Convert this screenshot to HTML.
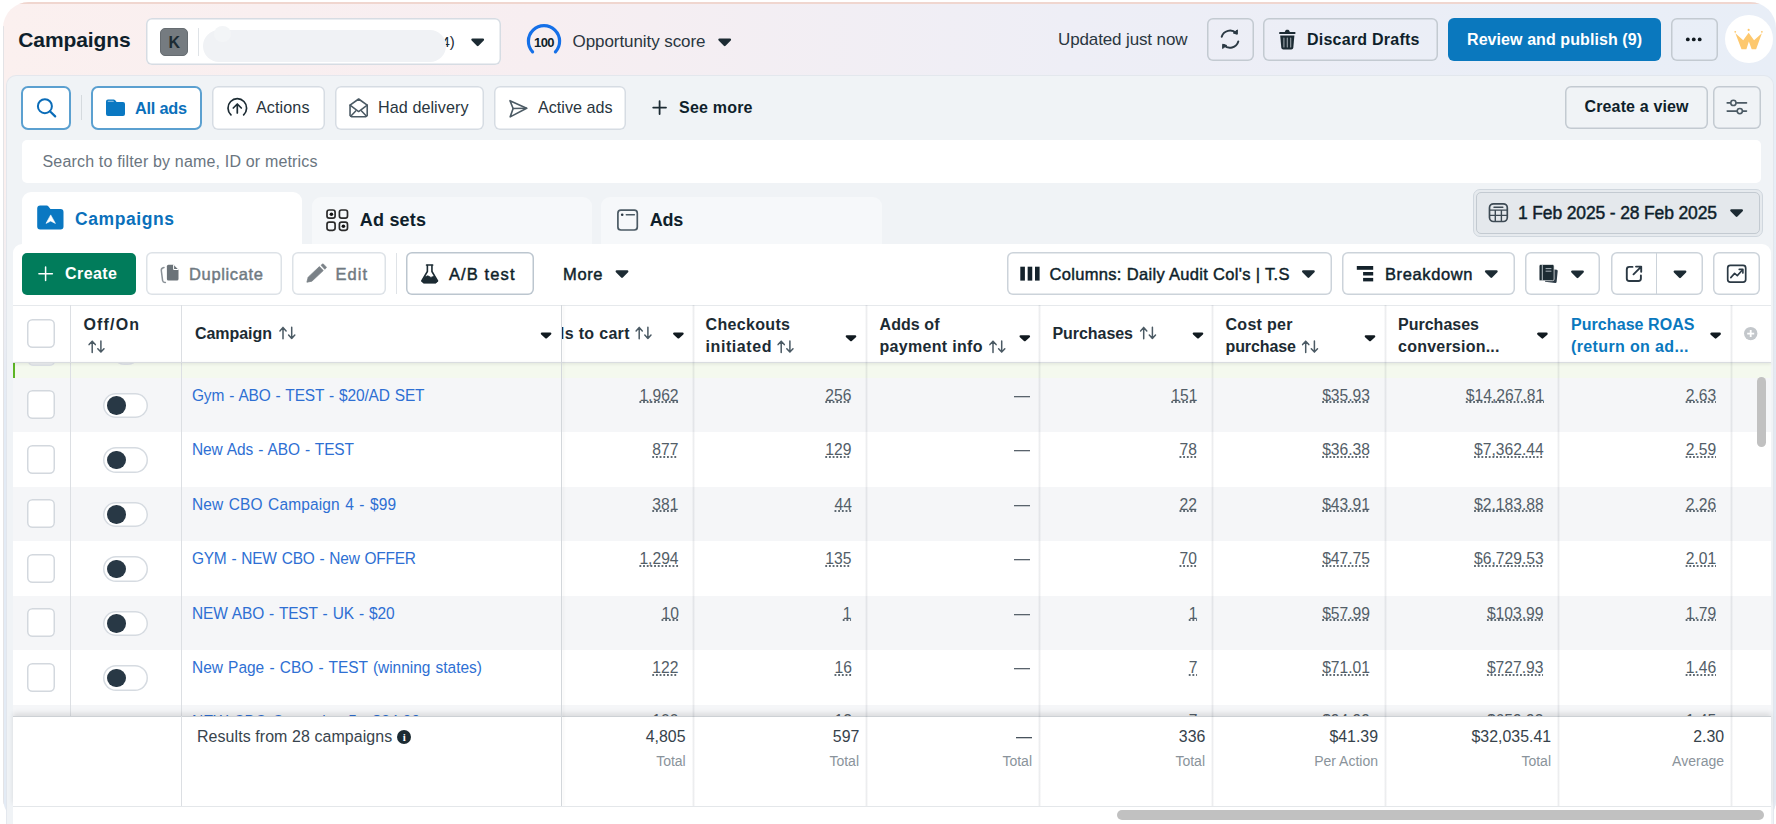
<!DOCTYPE html><html lang="en"><head><meta charset="utf-8"><title>Campaigns</title><style>
html,body{margin:0;padding:0}
body{width:1776px;height:824px;overflow:hidden;background:#fff;position:relative;font-family:"Liberation Sans",sans-serif}
.b{position:absolute;box-sizing:border-box}
.t{position:absolute;white-space:nowrap;line-height:24px;font-family:"Liberation Sans",sans-serif}
svg{position:absolute;overflow:visible}
.du{text-decoration:underline dotted #5f6a73;text-decoration-thickness:1.5px;text-underline-offset:0.6px;text-decoration-skip-ink:none}

</style></head><body>
<div class="b" style="left:3px;top:2px;width:1773px;height:822px;border-radius:26px 26px 24px 26px;overflow:hidden;background:linear-gradient(90deg,#fbf0ef 0%,#f7eef1 30%,#eeeef6 60%,#e8eef7 100%);"><div class="b" style="left:0;top:0;width:1773px;height:2px;background:#f0d6cf;"></div><div class="b" style="left:0;top:180px;width:6px;height:650px;background:linear-gradient(180deg,rgba(227,235,245,0) 0%,#e3ebf5 35%,#e3ebf5 100%);"></div><div class="b" style="left:0;top:24px;width:1px;height:780px;background:#e3e3e6;"></div><div class="b" style="right:0;top:180px;width:4px;height:650px;background:linear-gradient(180deg,rgba(225,232,242,0) 0%,#e3e9f2 35%,#e3e9f2 100%);"></div></div>
<div class="b" style="left:7px;top:75.5px;width:1765.5px;height:760px;border-radius:9px 9px 0 0;background:#f0f3f6;box-shadow:0 0 0 1px rgba(225,230,236,.9);"></div>
<div class="b" style="left:146px;top:18px;width:355px;height:47px;background:#fff;box-shadow:inset 0 0 0 1.5px #d6dce3;border-radius:6px;"></div>
<div class="b" style="left:160px;top:27.5px;width:28px;height:28.5px;background:#757b80;border-radius:5px;border:1px solid #666c71;"></div>
<div class="b" style="left:198px;top:28px;width:1px;height:28px;background:#dfe3e7;"></div>
<div class="b" style="left:203px;top:30px;width:243px;height:32px;background:#f0f2f5;border-radius:16px;z-index:1;"></div>
<div class="b" style="left:214px;top:25.5px;width:17px;height:16.5px;background:#f3f5f7;border-radius:50%;z-index:1;"></div>
<div class="b" style="left:1206.5px;top:18px;width:47.5px;height:43px;box-shadow:inset 0 0 0 1.5px #c3cad1;border-radius:6px;"></div>
<div class="b" style="left:1263px;top:18px;width:174.5px;height:43px;box-shadow:inset 0 0 0 1.5px #c3cad1;border-radius:6px;"></div>
<div class="b" style="left:1447.5px;top:17.5px;width:213.0px;height:43.5px;background:#0a78be;border-radius:6px;"></div>
<div class="b" style="left:1670.5px;top:18px;width:47.0px;height:43px;box-shadow:inset 0 0 0 1.5px #c3cad1;border-radius:6px;"></div>
<div class="b" style="left:1724.5px;top:14.5px;width:48.0px;height:48.0px;background:#fff;border-radius:50%;"></div>
<div class="b" style="left:21px;top:85.5px;width:50px;height:44.5px;background:#fff;border:2px solid #5ba0d0;border-radius:7px;"></div>
<div class="b" style="left:80.5px;top:95px;width:1.0px;height:25px;background:#d5dade;"></div>
<div class="b" style="left:91px;top:85.5px;width:111px;height:44.5px;background:#fff;border:2px solid #5ba0d0;border-radius:7px;"></div>
<div class="b" style="left:211.5px;top:86px;width:113.0px;height:44px;background:#fff;box-shadow:inset 0 0 0 1.5px #d6dce3;border-radius:6px;"></div>
<div class="b" style="left:334.5px;top:86px;width:149.5px;height:44px;background:#fff;box-shadow:inset 0 0 0 1.5px #d6dce3;border-radius:6px;"></div>
<div class="b" style="left:493.5px;top:86px;width:132.5px;height:44px;background:#fff;box-shadow:inset 0 0 0 1.5px #d6dce3;border-radius:6px;"></div>
<div class="b" style="left:1564.5px;top:85.5px;width:143.0px;height:43.0px;box-shadow:inset 0 0 0 1.5px #c3cad1;border-radius:6px;"></div>
<div class="b" style="left:1713px;top:85.5px;width:47.5px;height:43.0px;box-shadow:inset 0 0 0 1.5px #c3cad1;border-radius:6px;"></div>
<div class="b" style="left:21.5px;top:139.5px;width:1739.0px;height:43.0px;background:#fff;border-radius:5px;"></div>
<div class="b" style="left:21.5px;top:191.5px;width:280.5px;height:58.5px;background:#fff;border-radius:9px 9px 0 0;"></div>
<div class="b" style="left:312px;top:197px;width:280px;height:53px;background:#f6f8fa;border-radius:9px 9px 0 0;"></div>
<div class="b" style="left:601px;top:197px;width:280.5px;height:53px;background:#f6f8fa;border-radius:9px 9px 0 0;"></div>
<div class="b" style="left:1472.5px;top:189px;width:290.5px;height:48px;background:#e6eaee;border:1px solid #d0d7de;border-radius:7px;"></div>
<div class="b" style="left:1475.5px;top:192px;width:284.5px;height:42px;background:#e4e8ec;border:1px solid #c3cad1;border-radius:5px;"></div>
<div class="b" style="left:12.5px;top:244px;width:1758.0px;height:596px;background:#fff;border-radius:9px 9px 0 0;"></div>
<div class="b" style="left:21.5px;top:252.5px;width:114.5px;height:42.5px;background:#017c5b;border-radius:5px;"></div>
<div class="b" style="left:146px;top:252px;width:136px;height:43px;box-shadow:inset 0 0 0 1.5px #dde2e7;border-radius:6px;"></div>
<div class="b" style="left:292px;top:252px;width:93.5px;height:43px;box-shadow:inset 0 0 0 1.5px #dde2e7;border-radius:6px;"></div>
<div class="b" style="left:395.5px;top:253px;width:1.0px;height:41px;background:#dfe3e7;"></div>
<div class="b" style="left:405.5px;top:252px;width:128.0px;height:43px;box-shadow:inset 0 0 0 1.5px #bcc6cf;border-radius:6px;"></div>
<div class="b" style="left:1006.5px;top:252.2px;width:325.0px;height:42.8px;box-shadow:inset 0 0 0 1.5px #ccd3da;border-radius:6px;"></div>
<div class="b" style="left:1342px;top:252.2px;width:173px;height:42.8px;box-shadow:inset 0 0 0 1.5px #ccd3da;border-radius:6px;"></div>
<div class="b" style="left:1524.5px;top:252.2px;width:75.0px;height:42.8px;box-shadow:inset 0 0 0 1.5px #ccd3da;border-radius:6px;"></div>
<div class="b" style="left:1610.5px;top:252.2px;width:92.0px;height:42.8px;box-shadow:inset 0 0 0 1.5px #ccd3da;border-radius:6px;"></div>
<div class="b" style="left:1656px;top:253px;width:1px;height:41.5px;background:#ccd3da;"></div>
<div class="b" style="left:1713px;top:252.2px;width:47px;height:42.8px;box-shadow:inset 0 0 0 1.5px #ccd3da;border-radius:6px;"></div>
<div class="b" style="left:12.5px;top:305px;width:1758.0px;height:1px;background:#e6e9ec;"></div>
<div class="b" style="left:27px;top:319.2px;width:28.2px;height:29.1px;background:#fff;box-shadow:inset 0 0 0 1.5px #d3d8de;border-radius:5.5px;"></div>
<div class="b" style="left:12.5px;top:362px;width:1758.0px;height:16px;background:#f4f9ee;"></div>
<div class="b" style="left:12.5px;top:363px;width:2.5px;height:15px;background:#5db524;"></div>
<div class="b" style="left:27.6px;top:338px;width:27.6px;height:28px;background:#eef0f2;box-shadow:inset 0 0 0 1.5px #dde1e6;border-radius:5px;clip-path:inset(25px 0 0 0);"></div>
<div class="b" style="left:111.5px;top:339.6px;width:28.1px;height:25.6px;background:#e9ecef;box-shadow:inset 0 0 0 1.5px #dde1e6;border-radius:13px;clip-path:inset(23.4px 0 0 0);"></div>
<div class="b" style="left:12.5px;top:377.6px;width:1758.0px;height:54.5px;background:#f5f6f8;"></div>
<div class="b" style="left:27px;top:390.20000000000005px;width:28.2px;height:29.3px;background:#fff;box-shadow:inset 0 0 0 1.5px #d3d8de;border-radius:5.5px;"></div>
<div class="b" style="left:103.4px;top:392.6px;width:44.4px;height:25.7px;background:#fff;box-shadow:inset 0 0 0 1.5px #d6dbe1;border-radius:13px;"></div>
<div class="b" style="left:107px;top:396.1px;width:18.7px;height:18.7px;background:#283845;border-radius:50%;"></div>
<div class="b" style="left:1013.5px;top:396px;width:16.0px;height:1px;background:#59636c;box-shadow:0 1px 0 rgba(89,99,108,.3);"></div>
<div class="b" style="left:27px;top:444.70000000000005px;width:28.2px;height:29.3px;background:#fff;box-shadow:inset 0 0 0 1.5px #d3d8de;border-radius:5.5px;"></div>
<div class="b" style="left:103.4px;top:447.1px;width:44.4px;height:25.7px;background:#fff;box-shadow:inset 0 0 0 1.5px #d6dbe1;border-radius:13px;"></div>
<div class="b" style="left:107px;top:450.6px;width:18.7px;height:18.7px;background:#283845;border-radius:50%;"></div>
<div class="b" style="left:1013.5px;top:450px;width:16.0px;height:1px;background:#59636c;box-shadow:0 1px 0 rgba(89,99,108,.3);"></div>
<div class="b" style="left:12.5px;top:486.6px;width:1758.0px;height:54.5px;background:#f5f6f8;"></div>
<div class="b" style="left:27px;top:499.20000000000005px;width:28.2px;height:29.3px;background:#fff;box-shadow:inset 0 0 0 1.5px #d3d8de;border-radius:5.5px;"></div>
<div class="b" style="left:103.4px;top:501.6px;width:44.4px;height:25.7px;background:#fff;box-shadow:inset 0 0 0 1.5px #d6dbe1;border-radius:13px;"></div>
<div class="b" style="left:107px;top:505.1px;width:18.7px;height:18.7px;background:#283845;border-radius:50%;"></div>
<div class="b" style="left:1013.5px;top:505px;width:16.0px;height:1px;background:#59636c;box-shadow:0 1px 0 rgba(89,99,108,.3);"></div>
<div class="b" style="left:27px;top:553.7px;width:28.2px;height:29.3px;background:#fff;box-shadow:inset 0 0 0 1.5px #d3d8de;border-radius:5.5px;"></div>
<div class="b" style="left:103.4px;top:556.1px;width:44.4px;height:25.7px;background:#fff;box-shadow:inset 0 0 0 1.5px #d6dbe1;border-radius:13px;"></div>
<div class="b" style="left:107px;top:559.6px;width:18.7px;height:18.7px;background:#283845;border-radius:50%;"></div>
<div class="b" style="left:1013.5px;top:559px;width:16.0px;height:1px;background:#59636c;box-shadow:0 1px 0 rgba(89,99,108,.3);"></div>
<div class="b" style="left:12.5px;top:595.6px;width:1758.0px;height:54.5px;background:#f5f6f8;"></div>
<div class="b" style="left:27px;top:608.2px;width:28.2px;height:29.3px;background:#fff;box-shadow:inset 0 0 0 1.5px #d3d8de;border-radius:5.5px;"></div>
<div class="b" style="left:103.4px;top:610.6px;width:44.4px;height:25.7px;background:#fff;box-shadow:inset 0 0 0 1.5px #d6dbe1;border-radius:13px;"></div>
<div class="b" style="left:107px;top:614.1px;width:18.7px;height:18.7px;background:#283845;border-radius:50%;"></div>
<div class="b" style="left:1013.5px;top:614px;width:16.0px;height:1px;background:#59636c;box-shadow:0 1px 0 rgba(89,99,108,.3);"></div>
<div class="b" style="left:27px;top:662.7px;width:28.2px;height:29.3px;background:#fff;box-shadow:inset 0 0 0 1.5px #d3d8de;border-radius:5.5px;"></div>
<div class="b" style="left:103.4px;top:665.1px;width:44.4px;height:25.7px;background:#fff;box-shadow:inset 0 0 0 1.5px #d6dbe1;border-radius:13px;"></div>
<div class="b" style="left:107px;top:668.6px;width:18.7px;height:18.7px;background:#283845;border-radius:50%;"></div>
<div class="b" style="left:1013.5px;top:668px;width:16.0px;height:1px;background:#59636c;box-shadow:0 1px 0 rgba(89,99,108,.3);"></div>
<div class="b" style="left:12.5px;top:704.6px;width:1758.0px;height:54.5px;background:#f5f6f8;"></div>
<div class="b" style="left:27px;top:717.2px;width:28.2px;height:29.3px;background:#fff;box-shadow:inset 0 0 0 1.5px #d3d8de;border-radius:5.5px;"></div>
<div class="b" style="left:103.4px;top:719.6px;width:44.4px;height:25.7px;background:#fff;box-shadow:inset 0 0 0 1.5px #d6dbe1;border-radius:13px;"></div>
<div class="b" style="left:107px;top:723.1px;width:18.7px;height:18.7px;background:#283845;border-radius:50%;"></div>
<div class="b" style="left:1013.5px;top:723px;width:16.0px;height:1px;background:#59636c;box-shadow:0 1px 0 rgba(89,99,108,.3);"></div>
<div class="b" style="left:70px;top:305px;width:1px;height:411px;background:#dcdfe3;"></div>
<div class="b" style="left:181px;top:305px;width:1px;height:411px;background:#dcdfe3;"></div>
<div class="b" style="left:692px;top:305px;width:3px;height:501px;background:linear-gradient(90deg,rgba(40,50,70,.035) 0 1px,rgba(40,50,70,.085) 1px 2px,rgba(40,50,70,.035) 2px 3px);z-index:4;"></div>
<div class="b" style="left:865px;top:305px;width:3px;height:501px;background:linear-gradient(90deg,rgba(40,50,70,.035) 0 1px,rgba(40,50,70,.085) 1px 2px,rgba(40,50,70,.035) 2px 3px);z-index:4;"></div>
<div class="b" style="left:1038px;top:305px;width:3px;height:501px;background:linear-gradient(90deg,rgba(40,50,70,.035) 0 1px,rgba(40,50,70,.085) 1px 2px,rgba(40,50,70,.035) 2px 3px);z-index:4;"></div>
<div class="b" style="left:1211px;top:305px;width:3px;height:501px;background:linear-gradient(90deg,rgba(40,50,70,.035) 0 1px,rgba(40,50,70,.085) 1px 2px,rgba(40,50,70,.035) 2px 3px);z-index:4;"></div>
<div class="b" style="left:1384px;top:305px;width:3px;height:501px;background:linear-gradient(90deg,rgba(40,50,70,.035) 0 1px,rgba(40,50,70,.085) 1px 2px,rgba(40,50,70,.035) 2px 3px);z-index:4;"></div>
<div class="b" style="left:1557px;top:305px;width:3px;height:501px;background:linear-gradient(90deg,rgba(40,50,70,.035) 0 1px,rgba(40,50,70,.085) 1px 2px,rgba(40,50,70,.035) 2px 3px);z-index:4;"></div>
<div class="b" style="left:1730px;top:305px;width:3px;height:501px;background:linear-gradient(90deg,rgba(40,50,70,.035) 0 1px,rgba(40,50,70,.085) 1px 2px,rgba(40,50,70,.035) 2px 3px);z-index:4;"></div>
<div class="b" style="left:181px;top:716px;width:1px;height:90px;background:#dcdfe3;z-index:4;"></div>
<div class="b" style="left:561px;top:305px;width:1px;height:501px;background:#d3d7db;box-shadow:2px 0 3px rgba(0,0,0,.07);z-index:4;"></div>
<div class="b" style="left:12.5px;top:362px;width:1758.0px;height:1px;background:#d9dce0;box-shadow:0 1px 3px rgba(0,0,0,.16);"></div>
<div class="b" style="left:12.5px;top:716px;width:1758.0px;height:90px;background:#fff;border-top:1px solid #cdd1d5;box-shadow:0 -3px 5px rgba(0,0,0,.10);z-index:3;"></div>
<div class="b" style="left:12.5px;top:805.5px;width:1758.0px;height:1.0px;background:#e4e7ea;z-index:4;"></div>
<div class="b" style="left:12.5px;top:806.5px;width:1758.0px;height:23.5px;background:#fff;z-index:3;"></div>
<div class="b" style="left:397.4px;top:729.6px;width:14.0px;height:14.0px;background:#1c2b33;border-radius:50%;z-index:5;"></div>
<div class="b" style="left:1015.5px;top:737px;width:16.5px;height:1px;background:#48535d;box-shadow:0 1px 0 rgba(72,83,93,.3);z-index:5;"></div>
<div class="b" style="left:1117px;top:809.5px;width:647px;height:10.0px;background:#c1c1c1;border-radius:5px;z-index:6;"></div>
<div class="b" style="left:1756.5px;top:377px;width:9.5px;height:70px;background:#c1c1c1;border-radius:5px;"></div>
<svg width="1776" height="824" viewBox="0 0 1776 824" style="left:0;top:0;z-index:2;pointer-events:none"><path d="M472.50 39.60H482.90L477.70 44.88Z" fill="#1c2b33" stroke="#1c2b33" stroke-width="2.4" stroke-linejoin="round"/>
<path d="M719.50 39.60H729.90L724.70 44.88Z" fill="#1c2b33" stroke="#1c2b33" stroke-width="2.4" stroke-linejoin="round"/>
<path d="M1731.40 210.40H1741.80L1736.60 215.68Z" fill="#1c2b33" stroke="#1c2b33" stroke-width="2.4" stroke-linejoin="round"/>
<path d="M616.80 271.40H627.20L622.00 276.68Z" fill="#1c2b33" stroke="#1c2b33" stroke-width="2.4" stroke-linejoin="round"/>
<path d="M1303.20 271.40H1313.60L1308.40 276.68Z" fill="#1c2b33" stroke="#1c2b33" stroke-width="2.4" stroke-linejoin="round"/>
<path d="M1486.10 271.40H1496.50L1491.30 276.68Z" fill="#1c2b33" stroke="#1c2b33" stroke-width="2.4" stroke-linejoin="round"/>
<path d="M1572.30 271.60H1582.70L1577.50 276.88Z" fill="#1c2b33" stroke="#1c2b33" stroke-width="2.4" stroke-linejoin="round"/>
<path d="M1674.80 271.60H1685.20L1680.00 276.88Z" fill="#1c2b33" stroke="#1c2b33" stroke-width="2.4" stroke-linejoin="round"/>
<path d="M542.00 333.60H550.20L546.10 337.28Z" fill="#111a20" stroke="#111a20" stroke-width="2.4" stroke-linejoin="round"/>
<path d="M674.30 333.60H682.50L678.40 337.28Z" fill="#111a20" stroke="#111a20" stroke-width="2.4" stroke-linejoin="round"/>
<path d="M846.90 336.40H855.10L851.00 340.08Z" fill="#111a20" stroke="#111a20" stroke-width="2.4" stroke-linejoin="round"/>
<path d="M1020.70 336.40H1028.90L1024.80 340.08Z" fill="#111a20" stroke="#111a20" stroke-width="2.4" stroke-linejoin="round"/>
<path d="M1193.90 333.60H1202.10L1198.00 337.28Z" fill="#111a20" stroke="#111a20" stroke-width="2.4" stroke-linejoin="round"/>
<path d="M1365.90 336.40H1374.10L1370.00 340.08Z" fill="#111a20" stroke="#111a20" stroke-width="2.4" stroke-linejoin="round"/>
<path d="M1538.30 333.80H1546.50L1542.40 337.48Z" fill="#111a20" stroke="#111a20" stroke-width="2.4" stroke-linejoin="round"/>
<path d="M1711.50 333.80H1719.70L1715.60 337.48Z" fill="#111a20" stroke="#111a20" stroke-width="2.4" stroke-linejoin="round"/>
<path d="M92.20 352.50V341.30M89.10 344.60L92.20 341.30L95.30 344.60" fill="none" stroke="#4b5a64" stroke-width="1.5" stroke-linecap="round" stroke-linejoin="round"/>
<path d="M100.90 340.90V352.10M97.80 348.80L100.90 352.10L104.00 348.80" fill="none" stroke="#4b5a64" stroke-width="1.5" stroke-linecap="round" stroke-linejoin="round"/>
<path d="M283.00 338.80V327.60M279.90 330.90L283.00 327.60L286.10 330.90" fill="none" stroke="#4b5a64" stroke-width="1.5" stroke-linecap="round" stroke-linejoin="round"/>
<path d="M291.70 327.20V338.40M288.60 335.10L291.70 338.40L294.80 335.10" fill="none" stroke="#4b5a64" stroke-width="1.5" stroke-linecap="round" stroke-linejoin="round"/>
<path d="M639.20 338.80V327.60M636.10 330.90L639.20 327.60L642.30 330.90" fill="none" stroke="#4b5a64" stroke-width="1.5" stroke-linecap="round" stroke-linejoin="round"/>
<path d="M647.90 327.20V338.40M644.80 335.10L647.90 338.40L651.00 335.10" fill="none" stroke="#4b5a64" stroke-width="1.5" stroke-linecap="round" stroke-linejoin="round"/>
<path d="M781.20 352.50V341.30M778.10 344.60L781.20 341.30L784.30 344.60" fill="none" stroke="#4b5a64" stroke-width="1.5" stroke-linecap="round" stroke-linejoin="round"/>
<path d="M789.90 340.90V352.10M786.80 348.80L789.90 352.10L793.00 348.80" fill="none" stroke="#4b5a64" stroke-width="1.5" stroke-linecap="round" stroke-linejoin="round"/>
<path d="M993.00 352.50V341.30M989.90 344.60L993.00 341.30L996.10 344.60" fill="none" stroke="#4b5a64" stroke-width="1.5" stroke-linecap="round" stroke-linejoin="round"/>
<path d="M1001.70 340.90V352.10M998.60 348.80L1001.70 352.10L1004.80 348.80" fill="none" stroke="#4b5a64" stroke-width="1.5" stroke-linecap="round" stroke-linejoin="round"/>
<path d="M1143.70 338.80V327.60M1140.60 330.90L1143.70 327.60L1146.80 330.90" fill="none" stroke="#4b5a64" stroke-width="1.5" stroke-linecap="round" stroke-linejoin="round"/>
<path d="M1152.40 327.20V338.40M1149.30 335.10L1152.40 338.40L1155.50 335.10" fill="none" stroke="#4b5a64" stroke-width="1.5" stroke-linecap="round" stroke-linejoin="round"/>
<path d="M1305.70 352.50V341.30M1302.60 344.60L1305.70 341.30L1308.80 344.60" fill="none" stroke="#4b5a64" stroke-width="1.5" stroke-linecap="round" stroke-linejoin="round"/>
<path d="M1314.40 340.90V352.10M1311.30 348.80L1314.40 352.10L1317.50 348.80" fill="none" stroke="#4b5a64" stroke-width="1.5" stroke-linecap="round" stroke-linejoin="round"/>
<path d="M532.59 51.84A15.6 15.6 0 1 1 555.41 51.84" fill="none" stroke="#1570e8" stroke-width="3.2" stroke-linecap="round"/>
<path d="M1221.73 36.83A8.6 8.6 0 0 1 1236.19 33.23" fill="none" stroke="#2b3944" stroke-width="2" stroke-linecap="round"/>
<path d="M1238.27 41.57A8.6 8.6 0 0 1 1223.81 45.17" fill="none" stroke="#2b3944" stroke-width="2" stroke-linecap="round"/>
<path d="M1237.4 29.9L1237.3 34.2L1233.3 33Z" fill="#2b3944" stroke="#2b3944" stroke-width="1" stroke-linejoin="round"/>
<path d="M1222.6 48.5L1222.7 44.2L1226.7 45.4Z" fill="#2b3944" stroke="#2b3944" stroke-width="1" stroke-linejoin="round"/>
<path d="M1284.6 32.2L1285.6 30.3Q1285.9 29.8 1286.5 29.8H1288.1Q1288.7 29.8 1289 30.3L1290 32.2Z" fill="#1c2b33" stroke="none" stroke-width="0" />
<path d="M1279.8 32H1294.8Q1295.4 32 1295.4 32.6V33.4Q1295.4 34 1294.8 34H1279.8Q1279.2 34 1279.2 33.4V32.6Q1279.2 32 1279.8 32Z" fill="#1c2b33" stroke="none" stroke-width="0" />
<path d="M1280.2 35.6H1294.4L1293.3 47.8Q1293.1 49.6 1291.3 49.6H1283.3Q1281.5 49.6 1281.3 47.8Z" fill="#1c2b33" stroke="none" stroke-width="0" />
<path d="M1283.9 38V47" fill="none" stroke="#9aa3aa" stroke-width="1.1" stroke-linecap="round"/>
<path d="M1287.3 38V47" fill="none" stroke="#9aa3aa" stroke-width="1.1" stroke-linecap="round"/>
<path d="M1290.7 38V47" fill="none" stroke="#9aa3aa" stroke-width="1.1" stroke-linecap="round"/>
<circle cx="1687.8" cy="39.4" r="1.9" fill="#111a20"/>
<circle cx="1693.75" cy="39.4" r="1.9" fill="#111a20"/>
<circle cx="1699.7" cy="39.4" r="1.9" fill="#111a20"/>
<polygon points="1735.38,33.29 1743.20,40.22 1748.64,32.81 1754.07,40.22 1761.89,33.29 1756.11,49.20 1751.70,49.20 1748.84,41.45 1746.39,49.20 1741.50,49.20" fill="#fdc86e"/>
<circle cx="1735.24" cy="31.79" r="0.9" fill="#fdc86e"/>
<circle cx="1748.64" cy="29.89" r="1.1" fill="#fdc86e"/>
<circle cx="1761.89" cy="31.79" r="0.9" fill="#fdc86e"/>
<circle cx="44.9" cy="106.2" r="7" fill="none" stroke="#0a6cb8" stroke-width="2"/>
<path d="M49.9 111.2L55.2 116.4" fill="none" stroke="#0a6cb8" stroke-width="2.2" stroke-linecap="round"/>
<path d="M108 99.4H113.6Q114.4 99.4 115 100L116.6 101.9H123Q125 101.9 125 103.9V114Q125 116 123 116H108Q106 116 106 114V101.4Q106 99.4 108 99.4Z" fill="#0a78c2" stroke="none" stroke-width="0" />
<path d="M108.3 101.4H113.2" fill="none" stroke="#7fb6de" stroke-width="1.2" stroke-linecap="round"/>
<path d="M230.96 114.80A9.3 9.3 0 1 1 243.64 114.80" fill="none" stroke="#1c2b33" stroke-width="1.7" stroke-linecap="round"/>
<path d="M237.3 113V104.2M233.3 108L237.3 104L241.3 108" fill="none" stroke="#1c2b33" stroke-width="1.7" stroke-linecap="round" stroke-linejoin="round"/>
<path d="M358.64 99.00L367.22 105.08L367.22 115.42L365.73 116.77L351.54 116.77L350.05 115.42L350.05 105.08Z" fill="none" stroke="#4b5a64" stroke-width="1.6" stroke-linecap="round" stroke-linejoin="round"/>
<path d="M350.05 105.08L358.64 111.57L367.22 105.08" fill="none" stroke="#4b5a64" stroke-width="1.5" stroke-linecap="round" stroke-linejoin="round"/>
<path d="M350.73 116.30L355.73 110.89M366.54 116.30L361.54 110.89" fill="none" stroke="#4b5a64" stroke-width="1.5" stroke-linecap="round" stroke-linejoin="round"/>
<path d="M509.96 100.67L526.63 108.32L510.19 116.88L513.12 108.55Z" fill="none" stroke="#4b5a64" stroke-width="1.6" stroke-linecap="round" stroke-linejoin="round"/>
<path d="M513.12 108.55L526.63 108.32" fill="none" stroke="#4b5a64" stroke-width="1.5" stroke-linecap="round" stroke-linejoin="round"/>
<path d="M653.2 107.6H666M659.6 101.2V114" fill="none" stroke="#1c2b33" stroke-width="1.8" stroke-linecap="round"/>
<path d="M1727.2 102.9H1730.3M1736.6 102.9H1746.5M1727.2 111.1H1736.7M1743 111.1H1746.5" fill="none" stroke="#4b5a64" stroke-width="1.6" stroke-linecap="round"/>
<circle cx="1733.4" cy="102.9" r="2.6" fill="none" stroke="#4b5a64" stroke-width="1.6"/>
<circle cx="1739.8" cy="111.1" r="2.6" fill="none" stroke="#4b5a64" stroke-width="1.6"/>
<path d="M40.2 205.5H46.6Q47.8 205.5 48.5 206.4L50.4 209H60.5Q63.5 209 63.5 212V226.5Q63.5 229.5 60.5 229.5H40.2Q37.2 229.5 37.2 226.5V208.5Q37.2 205.5 40.2 205.5Z" fill="#0a78c2" stroke="none" stroke-width="0" />
<path d="M50.7 214.9L55.4 223.4L50.7 221.1L46 223.4Z" fill="#fff" stroke="#fff" stroke-width="0.6" stroke-linejoin="round"/>
<rect x="327" y="210" width="8.1" height="8.1" rx="2.2" fill="none" stroke="#2a2a2a" stroke-width="1.7"/>
<rect x="339.4" y="210" width="8.1" height="8.1" rx="2.2" fill="none" stroke="#2a2a2a" stroke-width="1.7"/>
<rect x="327" y="222.2" width="8.1" height="8.1" rx="2.2" fill="none" stroke="#2a2a2a" stroke-width="1.7"/>
<rect x="339.4" y="222.2" width="8.1" height="8.1" rx="2.2" fill="none" stroke="#2a2a2a" stroke-width="1.7"/>
<circle cx="331.4" cy="214.2" r="1.8" fill="#111"/>
<circle cx="343.4" cy="226.2" r="1.8" fill="#111"/>
<rect x="617.9" y="210.2" width="19.4" height="19.8" rx="3" fill="none" stroke="#4b5a64" stroke-width="1.7"/>
<circle cx="622.2" cy="214.8" r="1.3" fill="#2b3944"/>
<path d="M626.3 214.8H634.4" fill="none" stroke="#4b5a64" stroke-width="1.5" stroke-linecap="round"/>
<rect x="1489.5" y="203.8" width="17.8" height="17.7" rx="4" fill="none" stroke="#3d4a54" stroke-width="1.7"/>
<path d="M1489.5 210.1H1507.3M1489.5 215.4H1507.3M1495.3 210.1V221.5M1501.4 210.1V221.5" fill="none" stroke="#3d4a54" stroke-width="1.4" />
<path d="M1494 207.2H1502.8" fill="none" stroke="#3d4a54" stroke-width="1.5" stroke-linecap="round"/>
<path d="M38.9 273.8H52.4M45.6 267V280.6" fill="none" stroke="#fff" stroke-width="1.5" stroke-linecap="round"/>
<path d="M168.4 264.7H173.5L178.5 269.7V279.1Q178.5 280.6 177 280.6H168.4Q166.9 280.6 166.9 279.1V266.2Q166.9 264.7 168.4 264.7Z" fill="#6b7379" stroke="none" stroke-width="0" />
<path d="M173.6 264.9V269.5H178.3" fill="none" stroke="#fff" stroke-width="1" stroke-linejoin="round"/>
<path d="M164 267.6Q161 268 161.3 270.5L162.6 280.6Q163 282.6 165.4 282.4" fill="none" stroke="#8a9197" stroke-width="1.5" stroke-linecap="round"/>
<path d="M306.9 282.2L308.2 277.2L319.4 266.6L323.2 270.6L311.9 281.2Z" fill="#7a8187" stroke="#7a8187" stroke-width="0.8" stroke-linejoin="round"/>
<path d="M321 265.3L322.4 264.1Q323 263.6 323.6 264.2L326.2 266.9Q326.7 267.5 326.1 268.1L324.7 269.3Z" fill="#7a8187" stroke="#7a8187" stroke-width="0.6" stroke-linejoin="round"/>
<path d="M426.6 265H432.6" fill="none" stroke="#1c2b33" stroke-width="1.7" stroke-linecap="round"/>
<path d="M427.38 265.43L427.38 271.51L421.81 280.94L423.83 282.76L435.49 282.76L437.52 280.94L431.94 271.51L431.94 265.43" fill="none" stroke="#1c2b33" stroke-width="1.6" stroke-linecap="round" stroke-linejoin="round"/>
<path d="M424.64 276.88L427.89 275.87L430.93 277.39L434.17 276.17L437.21 281.24L435.79 282.76L423.53 282.76L422.11 281.24Z" fill="#1c2b33" stroke="#1c2b33" stroke-width="0.8" stroke-linejoin="round"/>
<rect x="1020.3" y="266.7" width="4.6" height="13.9" fill="#14222b"/>
<rect x="1027.65" y="266.7" width="4.6" height="13.9" fill="#14222b"/>
<rect x="1035" y="266.7" width="4.6" height="13.9" fill="#14222b"/>
<rect x="1356.8" y="266" width="16.4" height="3.8" fill="#14222b"/>
<rect x="1363.1" y="272" width="10.1" height="3.5" fill="#14222b"/>
<rect x="1363.1" y="277.9" width="10.1" height="3.5" fill="#14222b"/>
<path d="M1545.5 268.5L1556.8 269.7Q1557.8 269.9 1557.7 270.9L1556.6 282Q1556.4 283.1 1555.3 283L1545 281.8Z" fill="#2b3944" stroke="none" stroke-width="0" />
<path d="M1540.6 264.4H1552.6Q1554.1 264.4 1554.1 265.9V279.2Q1554.1 280.7 1552.6 280.7H1540.6Q1539.1 280.7 1539.1 279.2V265.9Q1539.1 264.4 1540.6 264.4Z" fill="#1c2b33" stroke="#fff" stroke-width="0.7" />
<path d="M1542.3 264.6V280.5" fill="none" stroke="#cfd5da" stroke-width="0.9" />
<path d="M1545.6 268.6H1551.4M1545.6 271.2H1551.4" fill="none" stroke="#aab3ba" stroke-width="1" />
<path d="M1632.5 266.9H1629.3Q1626.8 266.9 1626.8 269.4V278.5Q1626.8 281 1629.3 281H1638.4Q1640.9 281 1640.9 278.5V275.4" fill="none" stroke="#2b3944" stroke-width="1.9" stroke-linecap="round" stroke-linejoin="round"/>
<path d="M1633.5 274.3L1641 266.8M1636 266.6H1641.2V271.8" fill="none" stroke="#2b3944" stroke-width="1.9" stroke-linecap="round" stroke-linejoin="round"/>
<rect x="1727.7" y="265.3" width="18" height="16.9" rx="2.6" fill="none" stroke="#2b3944" stroke-width="1.7"/>
<path d="M1730.8 277.6L1734.6 273.4L1737.3 275.6L1742.4 270" fill="none" stroke="#2b3944" stroke-width="1.6" stroke-linecap="round" stroke-linejoin="round"/>
<path d="M1739.2 269.4H1742.9V273.1" fill="none" stroke="#2b3944" stroke-width="1.6" stroke-linecap="round" stroke-linejoin="round"/>
<circle cx="1750.7" cy="333.6" r="6.7" fill="#c3c7cb"/>
<path d="M1747.2 333.6H1754.2M1750.7 330.1V337.1" fill="none" stroke="#fff" stroke-width="1.8" /></svg>
<span class="t" style="top:28.10px;font-size:21px;font-weight:700;color:#0f1f2b;left:18.30px;letter-spacing:-0.100px;">Campaigns</span>
<span class="t" style="top:31.00px;font-size:16px;font-weight:700;color:#1c2b33;left:168.60px;">K</span>
<span class="t" style="top:30.00px;font-size:15px;font-weight:400;color:#1c2b33;left:441.50px;">4)</span>
<span class="t" style="top:30.60px;font-size:13px;font-weight:700;color:#0f1f2b;left:534.00px;letter-spacing:-0.602px;">100</span>
<span class="t" style="top:30.30px;font-size:17px;font-weight:400;color:#2a3640;left:572.50px;letter-spacing:-0.074px;">Opportunity score</span>
<span class="t" style="top:27.50px;font-size:17px;font-weight:400;color:#2a3640;left:1058.00px;letter-spacing:-0.125px;">Updated just now</span>
<span class="t" style="top:27.50px;font-size:16px;font-weight:700;color:#0f1f2b;left:1307.00px;letter-spacing:0.240px;">Discard Drafts</span>
<span class="t" style="top:27.50px;font-size:16px;font-weight:700;color:#ffffff;left:1467.00px;letter-spacing:0.078px;">Review and publish (9)</span>
<span class="t" style="top:95.50px;font-size:16.3px;font-weight:700;color:#0a70bb;left:135.00px;letter-spacing:-0.232px;">All ads</span>
<span class="t" style="top:96.20px;font-size:17px;font-weight:400;color:#2a3640;left:255.50px;letter-spacing:0.094px;transform:scaleX(0.95);transform-origin:left center;">Actions</span>
<span class="t" style="top:96.20px;font-size:17px;font-weight:400;color:#2a3640;left:378.00px;letter-spacing:0.069px;transform:scaleX(0.95);transform-origin:left center;">Had delivery</span>
<span class="t" style="top:96.20px;font-size:17px;font-weight:400;color:#2a3640;left:537.50px;transform:scaleX(0.95);transform-origin:left center;">Active ads</span>
<span class="t" style="top:95.50px;font-size:16px;font-weight:700;color:#0f1f2b;left:679.00px;letter-spacing:0.208px;">See more</span>
<span class="t" style="top:94.50px;font-size:16px;font-weight:700;color:#0f1f2b;left:1584.50px;letter-spacing:0.143px;">Create a view</span>
<span class="t" style="top:150.00px;font-size:16px;font-weight:400;color:#6a7580;left:42.50px;letter-spacing:0.170px;">Search to filter by name, ID or metrics</span>
<span class="t" style="top:206.60px;font-size:17.5px;font-weight:700;color:#0a70bb;left:75.00px;letter-spacing:0.584px;">Campaigns</span>
<span class="t" style="top:208.40px;font-size:18px;font-weight:700;color:#0f1f2b;left:359.80px;letter-spacing:0.195px;">Ad sets</span>
<span class="t" style="top:208.40px;font-size:18px;font-weight:700;color:#0f1f2b;left:649.80px;letter-spacing:-0.258px;">Ads</span>
<span class="t" style="top:201.40px;font-size:17.5px;font-weight:400;color:#0f1f2b;left:1518.00px;letter-spacing:-0.147px;-webkit-text-stroke:0.45px currentColor;">1 Feb 2025 - 28 Feb 2025</span>
<span class="t" style="top:262.30px;font-size:16px;font-weight:700;color:#fff;left:65.00px;letter-spacing:0.438px;">Create</span>
<span class="t" style="top:262.30px;font-size:16.5px;font-weight:400;color:#707a82;left:189.00px;letter-spacing:0.650px;-webkit-text-stroke:0.45px currentColor;">Duplicate</span>
<span class="t" style="top:262.30px;font-size:16.5px;font-weight:400;color:#707a82;left:335.50px;letter-spacing:1.021px;-webkit-text-stroke:0.45px currentColor;">Edit</span>
<span class="t" style="top:262.30px;font-size:16.5px;font-weight:400;color:#0f1f2b;left:449.00px;letter-spacing:1.103px;-webkit-text-stroke:0.45px currentColor;">A/B test</span>
<span class="t" style="top:262.30px;font-size:16.5px;font-weight:400;color:#0f1f2b;left:563.00px;letter-spacing:0.635px;-webkit-text-stroke:0.45px currentColor;">More</span>
<span class="t" style="top:262.30px;font-size:16.5px;font-weight:400;color:#0f1f2b;left:1049.50px;letter-spacing:0.324px;-webkit-text-stroke:0.45px currentColor;">Columns: Daily Audit Col's | T.S</span>
<span class="t" style="top:262.30px;font-size:16.5px;font-weight:400;color:#0f1f2b;left:1385.00px;letter-spacing:0.617px;-webkit-text-stroke:0.45px currentColor;">Breakdown</span>
<span class="t" style="top:313.20px;font-size:16px;font-weight:700;color:#1c2b33;left:83.50px;letter-spacing:1.147px;">Off/On</span>
<span class="t" style="top:321.70px;font-size:16px;font-weight:700;color:#1c2b33;left:195.00px;letter-spacing:-0.049px;">Campaign</span>
<span class="t" style="top:321.70px;font-size:16px;font-weight:700;color:#1c2b33;left:554.60px;letter-spacing:0.320px;clip-path:inset(0 0 0 6.9px);">ds to cart</span>
<span class="t" style="top:313.20px;font-size:16px;font-weight:700;color:#1c2b33;left:705.50px;letter-spacing:0.338px;">Checkouts</span>
<span class="t" style="top:335.20px;font-size:16px;font-weight:700;color:#1c2b33;left:705.50px;letter-spacing:0.582px;">initiated</span>
<span class="t" style="top:313.20px;font-size:16px;font-weight:700;color:#1c2b33;left:879.50px;letter-spacing:0.076px;">Adds of</span>
<span class="t" style="top:335.20px;font-size:16px;font-weight:700;color:#1c2b33;left:879.50px;letter-spacing:0.312px;">payment info</span>
<span class="t" style="top:321.70px;font-size:16px;font-weight:700;color:#1c2b33;left:1052.50px;letter-spacing:-0.055px;">Purchases</span>
<span class="t" style="top:313.20px;font-size:16px;font-weight:700;color:#1c2b33;left:1225.50px;letter-spacing:0.299px;">Cost per</span>
<span class="t" style="top:335.20px;font-size:16px;font-weight:700;color:#1c2b33;left:1225.50px;letter-spacing:-0.092px;">purchase</span>
<span class="t" style="top:313.20px;font-size:16px;font-weight:700;color:#1c2b33;left:1398.00px;letter-spacing:0.008px;">Purchases</span>
<span class="t" style="top:335.20px;font-size:16px;font-weight:700;color:#1c2b33;left:1398.00px;letter-spacing:0.233px;">conversion...</span>
<span class="t" style="top:313.20px;font-size:16px;font-weight:700;color:#0a78be;left:1571.00px;letter-spacing:0.065px;">Purchase ROAS</span>
<span class="t" style="top:335.20px;font-size:16px;font-weight:700;color:#0a78be;left:1571.00px;letter-spacing:0.367px;">(return on ad...</span>
<span class="t" style="top:382.90px;font-size:17.2px;font-weight:400;color:#2e6fd3;left:192.00px;letter-spacing:-0.177px;transform:scaleX(0.9);transform-origin:left center;word-spacing:1px;">Gym - ABO - TEST - $20/AD SET</span>
<span class="t" style="top:383.70px;font-size:17px;font-weight:400;color:#535e68;right:1097.50px;transform:scaleX(0.92);transform-origin:right center;"><span class="du">1,962</span></span>
<span class="t" style="top:383.70px;font-size:17px;font-weight:400;color:#535e68;right:924.30px;transform:scaleX(0.92);transform-origin:right center;"><span class="du">256</span></span>
<span class="t" style="top:383.70px;font-size:17px;font-weight:400;color:#535e68;right:578.70px;transform:scaleX(0.92);transform-origin:right center;"><span class="du">151</span></span>
<span class="t" style="top:383.70px;font-size:17px;font-weight:400;color:#535e68;right:405.70px;transform:scaleX(0.92);transform-origin:right center;"><span class="du">$35.93</span></span>
<span class="t" style="top:383.70px;font-size:17px;font-weight:400;color:#535e68;right:232.40px;transform:scaleX(0.92);transform-origin:right center;"><span class="du">$14,267.81</span></span>
<span class="t" style="top:383.70px;font-size:17px;font-weight:400;color:#535e68;right:59.70px;transform:scaleX(0.92);transform-origin:right center;"><span class="du">2.63</span></span>
<span class="t" style="top:437.40px;font-size:17.2px;font-weight:400;color:#2e6fd3;left:192.00px;letter-spacing:-0.123px;transform:scaleX(0.9);transform-origin:left center;word-spacing:1px;">New Ads - ABO - TEST</span>
<span class="t" style="top:438.20px;font-size:17px;font-weight:400;color:#535e68;right:1097.50px;transform:scaleX(0.92);transform-origin:right center;"><span class="du">877</span></span>
<span class="t" style="top:438.20px;font-size:17px;font-weight:400;color:#535e68;right:924.30px;transform:scaleX(0.92);transform-origin:right center;"><span class="du">129</span></span>
<span class="t" style="top:438.20px;font-size:17px;font-weight:400;color:#535e68;right:578.70px;transform:scaleX(0.92);transform-origin:right center;"><span class="du">78</span></span>
<span class="t" style="top:438.20px;font-size:17px;font-weight:400;color:#535e68;right:405.70px;transform:scaleX(0.92);transform-origin:right center;"><span class="du">$36.38</span></span>
<span class="t" style="top:438.20px;font-size:17px;font-weight:400;color:#535e68;right:232.40px;transform:scaleX(0.92);transform-origin:right center;"><span class="du">$7,362.44</span></span>
<span class="t" style="top:438.20px;font-size:17px;font-weight:400;color:#535e68;right:59.70px;transform:scaleX(0.92);transform-origin:right center;"><span class="du">2.59</span></span>
<span class="t" style="top:491.90px;font-size:17.2px;font-weight:400;color:#2e6fd3;left:192.00px;letter-spacing:0.168px;transform:scaleX(0.9);transform-origin:left center;word-spacing:1px;">New CBO Campaign 4 - $99</span>
<span class="t" style="top:492.70px;font-size:17px;font-weight:400;color:#535e68;right:1097.50px;transform:scaleX(0.92);transform-origin:right center;"><span class="du">381</span></span>
<span class="t" style="top:492.70px;font-size:17px;font-weight:400;color:#535e68;right:924.30px;transform:scaleX(0.92);transform-origin:right center;"><span class="du">44</span></span>
<span class="t" style="top:492.70px;font-size:17px;font-weight:400;color:#535e68;right:578.70px;transform:scaleX(0.92);transform-origin:right center;"><span class="du">22</span></span>
<span class="t" style="top:492.70px;font-size:17px;font-weight:400;color:#535e68;right:405.70px;transform:scaleX(0.92);transform-origin:right center;"><span class="du">$43.91</span></span>
<span class="t" style="top:492.70px;font-size:17px;font-weight:400;color:#535e68;right:232.40px;transform:scaleX(0.92);transform-origin:right center;"><span class="du">$2,183.88</span></span>
<span class="t" style="top:492.70px;font-size:17px;font-weight:400;color:#535e68;right:59.70px;transform:scaleX(0.92);transform-origin:right center;"><span class="du">2.26</span></span>
<span class="t" style="top:546.40px;font-size:17.2px;font-weight:400;color:#2e6fd3;left:192.00px;letter-spacing:-0.264px;transform:scaleX(0.9);transform-origin:left center;word-spacing:1px;">GYM - NEW CBO - New OFFER</span>
<span class="t" style="top:547.20px;font-size:17px;font-weight:400;color:#535e68;right:1097.50px;transform:scaleX(0.92);transform-origin:right center;"><span class="du">1,294</span></span>
<span class="t" style="top:547.20px;font-size:17px;font-weight:400;color:#535e68;right:924.30px;transform:scaleX(0.92);transform-origin:right center;"><span class="du">135</span></span>
<span class="t" style="top:547.20px;font-size:17px;font-weight:400;color:#535e68;right:578.70px;transform:scaleX(0.92);transform-origin:right center;"><span class="du">70</span></span>
<span class="t" style="top:547.20px;font-size:17px;font-weight:400;color:#535e68;right:405.70px;transform:scaleX(0.92);transform-origin:right center;"><span class="du">$47.75</span></span>
<span class="t" style="top:547.20px;font-size:17px;font-weight:400;color:#535e68;right:232.40px;transform:scaleX(0.92);transform-origin:right center;"><span class="du">$6,729.53</span></span>
<span class="t" style="top:547.20px;font-size:17px;font-weight:400;color:#535e68;right:59.70px;transform:scaleX(0.92);transform-origin:right center;"><span class="du">2.01</span></span>
<span class="t" style="top:600.90px;font-size:17.2px;font-weight:400;color:#2e6fd3;left:192.00px;letter-spacing:-0.163px;transform:scaleX(0.9);transform-origin:left center;word-spacing:1px;">NEW ABO - TEST - UK - $20</span>
<span class="t" style="top:601.70px;font-size:17px;font-weight:400;color:#535e68;right:1097.50px;transform:scaleX(0.92);transform-origin:right center;"><span class="du">10</span></span>
<span class="t" style="top:601.70px;font-size:17px;font-weight:400;color:#535e68;right:924.30px;transform:scaleX(0.92);transform-origin:right center;"><span class="du">1</span></span>
<span class="t" style="top:601.70px;font-size:17px;font-weight:400;color:#535e68;right:578.70px;transform:scaleX(0.92);transform-origin:right center;"><span class="du">1</span></span>
<span class="t" style="top:601.70px;font-size:17px;font-weight:400;color:#535e68;right:405.70px;transform:scaleX(0.92);transform-origin:right center;"><span class="du">$57.99</span></span>
<span class="t" style="top:601.70px;font-size:17px;font-weight:400;color:#535e68;right:232.40px;transform:scaleX(0.92);transform-origin:right center;"><span class="du">$103.99</span></span>
<span class="t" style="top:601.70px;font-size:17px;font-weight:400;color:#535e68;right:59.70px;transform:scaleX(0.92);transform-origin:right center;"><span class="du">1.79</span></span>
<span class="t" style="top:655.40px;font-size:17.2px;font-weight:400;color:#2e6fd3;left:192.00px;letter-spacing:-0.009px;transform:scaleX(0.9);transform-origin:left center;word-spacing:1px;">New Page - CBO - TEST (winning states)</span>
<span class="t" style="top:656.20px;font-size:17px;font-weight:400;color:#535e68;right:1097.50px;transform:scaleX(0.92);transform-origin:right center;"><span class="du">122</span></span>
<span class="t" style="top:656.20px;font-size:17px;font-weight:400;color:#535e68;right:924.30px;transform:scaleX(0.92);transform-origin:right center;"><span class="du">16</span></span>
<span class="t" style="top:656.20px;font-size:17px;font-weight:400;color:#535e68;right:578.70px;transform:scaleX(0.92);transform-origin:right center;"><span class="du">7</span></span>
<span class="t" style="top:656.20px;font-size:17px;font-weight:400;color:#535e68;right:405.70px;transform:scaleX(0.92);transform-origin:right center;"><span class="du">$71.01</span></span>
<span class="t" style="top:656.20px;font-size:17px;font-weight:400;color:#535e68;right:232.40px;transform:scaleX(0.92);transform-origin:right center;"><span class="du">$727.93</span></span>
<span class="t" style="top:656.20px;font-size:17px;font-weight:400;color:#535e68;right:59.70px;transform:scaleX(0.92);transform-origin:right center;"><span class="du">1.46</span></span>
<span class="t" style="top:708.60px;font-size:17.2px;font-weight:400;color:#2e6fd3;left:192.00px;letter-spacing:0.035px;transform:scaleX(0.9);transform-origin:left center;word-spacing:1px;">NEW CBO Campaign 5 - $24.99</span>
<span class="t" style="top:709.40px;font-size:17px;font-weight:400;color:#535e68;right:1097.50px;transform:scaleX(0.92);transform-origin:right center;"><span class="du">100</span></span>
<span class="t" style="top:709.40px;font-size:17px;font-weight:400;color:#535e68;right:924.30px;transform:scaleX(0.92);transform-origin:right center;"><span class="du">12</span></span>
<span class="t" style="top:709.40px;font-size:17px;font-weight:400;color:#535e68;right:578.70px;transform:scaleX(0.92);transform-origin:right center;"><span class="du">7</span></span>
<span class="t" style="top:709.40px;font-size:17px;font-weight:400;color:#535e68;right:405.70px;transform:scaleX(0.92);transform-origin:right center;"><span class="du">$94.99</span></span>
<span class="t" style="top:709.40px;font-size:17px;font-weight:400;color:#535e68;right:232.40px;transform:scaleX(0.92);transform-origin:right center;"><span class="du">$659.93</span></span>
<span class="t" style="top:709.40px;font-size:17px;font-weight:400;color:#535e68;right:59.70px;transform:scaleX(0.92);transform-origin:right center;"><span class="du">1.45</span></span>
<span class="t" style="top:724.70px;font-size:16.8px;font-weight:400;color:#38444d;left:196.80px;letter-spacing:0.089px;transform:scaleX(0.95);transform-origin:left center;z-index:5;">Results from 28 campaigns</span>
<span class="t" style="top:724.80px;font-size:11px;font-weight:700;color:#fff;left:402.80px;font-family:'Liberation Serif',serif;z-index:6;">i</span>
<span class="t" style="top:724.80px;font-size:17px;font-weight:400;color:#36424b;right:1090.30px;transform:scaleX(0.935);transform-origin:right center;z-index:5;">4,805</span>
<span class="t" style="top:748.50px;font-size:14px;font-weight:400;color:#8a939b;right:1090.30px;z-index:5;">Total</span>
<span class="t" style="top:724.80px;font-size:17px;font-weight:400;color:#36424b;right:917.00px;transform:scaleX(0.935);transform-origin:right center;z-index:5;">597</span>
<span class="t" style="top:748.50px;font-size:14px;font-weight:400;color:#8a939b;right:917.00px;z-index:5;">Total</span>
<span class="t" style="top:748.50px;font-size:14px;font-weight:400;color:#8a939b;right:744.00px;z-index:5;">Total</span>
<span class="t" style="top:724.80px;font-size:17px;font-weight:400;color:#36424b;right:571.00px;transform:scaleX(0.935);transform-origin:right center;z-index:5;">336</span>
<span class="t" style="top:748.50px;font-size:14px;font-weight:400;color:#8a939b;right:571.00px;z-index:5;">Total</span>
<span class="t" style="top:724.80px;font-size:17px;font-weight:400;color:#36424b;right:398.00px;transform:scaleX(0.935);transform-origin:right center;z-index:5;">$41.39</span>
<span class="t" style="top:748.50px;font-size:14px;font-weight:400;color:#8a939b;right:398.00px;z-index:5;">Per Action</span>
<span class="t" style="top:724.80px;font-size:17px;font-weight:400;color:#36424b;right:225.00px;transform:scaleX(0.935);transform-origin:right center;z-index:5;">$32,035.41</span>
<span class="t" style="top:748.50px;font-size:14px;font-weight:400;color:#8a939b;right:225.00px;z-index:5;">Total</span>
<span class="t" style="top:724.80px;font-size:17px;font-weight:400;color:#36424b;right:52.00px;transform:scaleX(0.935);transform-origin:right center;z-index:5;">2.30</span>
<span class="t" style="top:748.50px;font-size:14px;font-weight:400;color:#8a939b;right:52.00px;z-index:5;">Average</span>
</body></html>
